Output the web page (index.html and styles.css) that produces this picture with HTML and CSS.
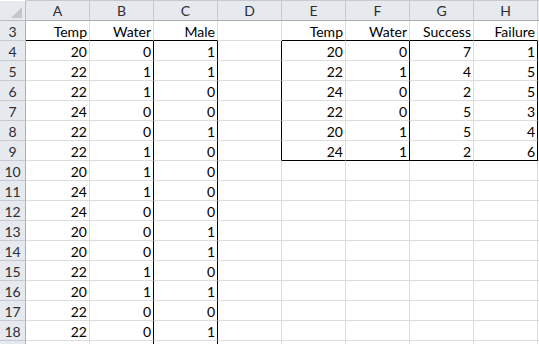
FILE: index.html
```html
<!DOCTYPE html>
<html>
<head>
<meta charset="utf-8">
<link rel="stylesheet" href="styles.css">
</head>
<body>
<div class="sheet">
  <div class="corner"><svg width="11" height="11" viewBox="0 0 11 11"><polygon points="11,0 11,11 0,11" fill="#c3c7cd"/></svg></div>
  <div class="ch">A</div><div class="ch">B</div><div class="ch">C</div><div class="ch">D</div><div class="ch">E</div><div class="ch">F</div><div class="ch">G</div><div class="ch">H</div><div class="ch"></div>

  <div class="rh">3</div>
  <div class="c bb">Temp</div><div class="c bb">Water</div><div class="c bb">Male</div><div class="c"></div>
  <div class="c bb">Temp</div><div class="c bb">Water</div><div class="c bb">Success</div><div class="c bb">Failure</div><div class="c"></div>

  <div class="rh">4</div>
  <div class="c">20</div><div class="c br">0</div><div class="c br">1</div><div class="c br"></div>
  <div class="c">20</div><div class="c br">0</div><div class="c">7</div><div class="c br">1</div><div class="c"></div>

  <div class="rh">5</div>
  <div class="c">22</div><div class="c br">1</div><div class="c br">1</div><div class="c br"></div>
  <div class="c">22</div><div class="c br">1</div><div class="c">4</div><div class="c br">5</div><div class="c"></div>

  <div class="rh">6</div>
  <div class="c">22</div><div class="c br">1</div><div class="c br">0</div><div class="c br"></div>
  <div class="c">24</div><div class="c br">0</div><div class="c">2</div><div class="c br">5</div><div class="c"></div>

  <div class="rh">7</div>
  <div class="c">24</div><div class="c br">0</div><div class="c br">0</div><div class="c br"></div>
  <div class="c">22</div><div class="c br">0</div><div class="c">5</div><div class="c br">3</div><div class="c"></div>

  <div class="rh">8</div>
  <div class="c">22</div><div class="c br">0</div><div class="c br">1</div><div class="c br"></div>
  <div class="c">20</div><div class="c br">1</div><div class="c">5</div><div class="c br">4</div><div class="c"></div>

  <div class="rh">9</div>
  <div class="c">22</div><div class="c br">1</div><div class="c br">0</div><div class="c br"></div>
  <div class="c bb">24</div><div class="c br bb">1</div><div class="c bb">2</div><div class="c br bb">6</div><div class="c"></div>

  <div class="rh">10</div>
  <div class="c">20</div><div class="c br">1</div><div class="c br">0</div><div class="c"></div>
  <div class="c"></div><div class="c"></div><div class="c"></div><div class="c"></div><div class="c"></div>

  <div class="rh">11</div>
  <div class="c">24</div><div class="c br">1</div><div class="c br">0</div><div class="c"></div>
  <div class="c"></div><div class="c"></div><div class="c"></div><div class="c"></div><div class="c"></div>

  <div class="rh">12</div>
  <div class="c">24</div><div class="c br">0</div><div class="c br">0</div><div class="c"></div>
  <div class="c"></div><div class="c"></div><div class="c"></div><div class="c"></div><div class="c"></div>

  <div class="rh">13</div>
  <div class="c">20</div><div class="c br">0</div><div class="c br">1</div><div class="c"></div>
  <div class="c"></div><div class="c"></div><div class="c"></div><div class="c"></div><div class="c"></div>

  <div class="rh">14</div>
  <div class="c">20</div><div class="c br">0</div><div class="c br">1</div><div class="c"></div>
  <div class="c"></div><div class="c"></div><div class="c"></div><div class="c"></div><div class="c"></div>

  <div class="rh">15</div>
  <div class="c">22</div><div class="c br">1</div><div class="c br">0</div><div class="c"></div>
  <div class="c"></div><div class="c"></div><div class="c"></div><div class="c"></div><div class="c"></div>

  <div class="rh">16</div>
  <div class="c">20</div><div class="c br">1</div><div class="c br">1</div><div class="c"></div>
  <div class="c"></div><div class="c"></div><div class="c"></div><div class="c"></div><div class="c"></div>

  <div class="rh">17</div>
  <div class="c">22</div><div class="c br">0</div><div class="c br">0</div><div class="c"></div>
  <div class="c"></div><div class="c"></div><div class="c"></div><div class="c"></div><div class="c"></div>

  <div class="rh">18</div>
  <div class="c">22</div><div class="c br">0</div><div class="c br">1</div><div class="c"></div>
  <div class="c"></div><div class="c"></div><div class="c"></div><div class="c"></div><div class="c"></div>

  <div class="rh"></div>
  <div class="c"></div><div class="c br"></div><div class="c br"></div><div class="c"></div>
  <div class="c"></div><div class="c"></div><div class="c"></div><div class="c"></div><div class="c"></div>
</div>
</body>
</html>
```
FILE: styles.css
```css
html, body {
  margin: 0;
  padding: 0;
  background: #ffffff;
  overflow: hidden;
  width: 539px;
  height: 344px;
}
.sheet {
  display: grid;
  grid-template-columns: 26px repeat(9, 64px);
  grid-template-rows: 21px;
  grid-auto-rows: 20px;
  font-family: Lato, "Open Sans", sans-serif;
  font-size: 14px;
  color: #000;
}
.sheet > div {
  box-sizing: border-box;
  display: flex;
  align-items: flex-end;
  line-height: 16px;
  overflow: hidden;
  white-space: nowrap;
}
.corner {
  background: #e6e9ed;
  border-top: 1px solid #ffffff;
  border-right: 1px solid #b9bec5;
  border-bottom: 1px solid #b9bec5;
  justify-content: flex-end;
  padding: 0 3px 2px 0;
}
.ch {
  background: #e6e9ed;
  border-top: 1px solid #c6cad0;
  border-right: 1px solid #c6cad0;
  border-bottom: 1px solid #a9aeb6;
  justify-content: center;
  color: #2b2f36;
  padding-bottom: 1px;
}
.rh {
  background: #e6e9ed;
  border-right: 1px solid #a9aeb6;
  border-bottom: 1px solid #c6cad0;
  justify-content: center;
  color: #2b2f36;
}
.c {
  border-right: 1px solid #dadcdd;
  border-bottom: 1px solid #dadcdd;
  justify-content: flex-end;
  padding-right: 2px;
}
.br {
  border-right-color: #000000 !important;
}
.bb {
  border-bottom-color: #000000 !important;
}
```
